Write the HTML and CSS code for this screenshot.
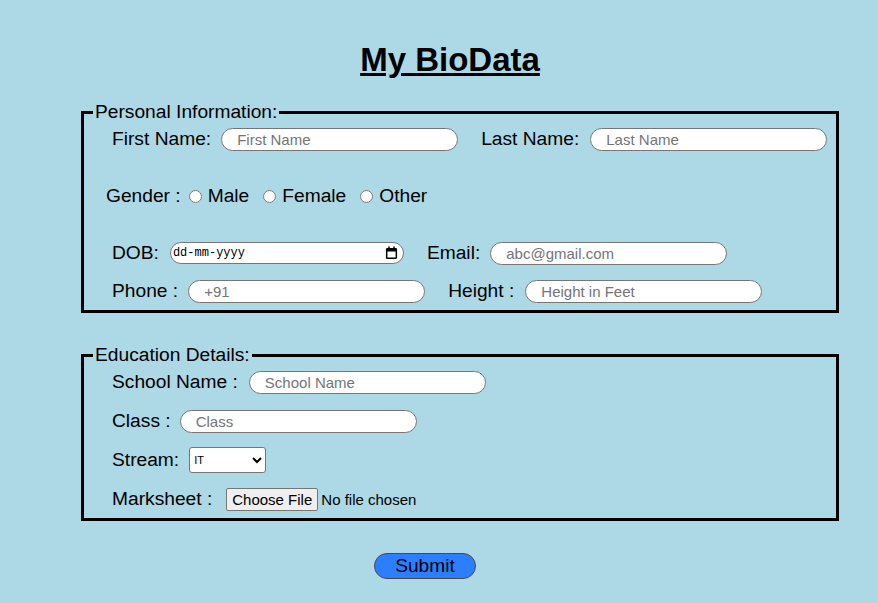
FILE: index.html
```html
<!DOCTYPE html>
<html lang="en">
<head>
<meta charset="utf-8">
<title>My BioData</title>
<link rel="stylesheet" href="styles.css">
</head>
<body>
<h1 class="title">My BioData</h1>
<form class="form">
  <fieldset class="box box-personal">
    <legend class="legend">Personal Information:</legend>
    <div class="row">
      <label class="lbl">First Name:</label>
      <input class="field" type="text" placeholder="First Name">
      <label class="lbl lbl-second">Last Name:</label>
      <input class="field field-last" type="text" placeholder="Last Name">
    </div>
    <div class="row row-gender">
      <span class="lbl">Gender :</span>
      <input class="radio radio-first" type="radio" name="gender"><span class="lbl">Male</span>
      <input class="radio" type="radio" name="gender"><span class="lbl">Female</span>
      <input class="radio" type="radio" name="gender"><span class="lbl">Other</span>
    </div>
    <div class="row row-dob">
      <label class="lbl">DOB:</label>
      <span class="date-wrap">
        <input class="date" type="text" value="dd-mm-yyyy" readonly>
        <svg class="cal-icon" viewBox="0 0 14 15" aria-hidden="true"><path d="M2.5 2h9a1.5 1.5 0 0 1 1.5 1.5v9a1.5 1.5 0 0 1-1.5 1.5h-9A1.5 1.5 0 0 1 1 12.5v-9A1.5 1.5 0 0 1 2.5 2zM2.6 6v6.4h8.8V6z" fill="#000"/><rect x="3.5" y="0.5" width="1.6" height="2.5" fill="#000"/><rect x="8.9" y="0.5" width="1.6" height="2.5" fill="#000"/></svg>
      </span>
      <label class="lbl lbl-second">Email:</label>
      <input class="field" type="text" placeholder="abc@gmail.com">
    </div>
    <div class="row row-phone">
      <label class="lbl">Phone :</label>
      <input class="field" type="text" placeholder="+91">
      <label class="lbl lbl-second">Height :</label>
      <input class="field field-last" type="text" placeholder="Height in Feet">
    </div>
  </fieldset>

  <fieldset class="box box-edu">
    <legend class="legend">Education Details:</legend>
    <div class="row">
      <label class="lbl">School Name :</label>
      <input class="field field-last" type="text" placeholder="School Name">
    </div>
    <div class="row row-class">
      <label class="lbl">Class :</label>
      <input class="field field-class" type="text" placeholder="Class">
    </div>
    <div class="row row-stream">
      <label class="lbl">Stream:</label>
      <select class="select">
        <option>IT</option>
        <option>CS</option>
        <option>EXTC</option>
      </select>
    </div>
    <div class="row row-mark">
      <label class="lbl">Marksheet :</label>
      <input class="file" type="file">
    </div>
  </fieldset>

  <div class="submit-row">
    <button class="submit" type="button">Submit</button>
  </div>
</form>
</body>
</html>
```

FILE: styles.css
```css
body {
  margin: 0;
  background: #add8e6;
  font-family: "Liberation Sans", Arial, sans-serif;
  color: #000;
}

.title {
  margin: 41px 0 0;
  padding-left: 22px;
  text-align: center;
  font-size: 33px;
  line-height: 38px;
  font-weight: bold;
  text-decoration: underline;
}

.form {
  margin: 0;
}

.box {
  box-sizing: border-box;
  width: 758px;
  margin: 22px 0 0 81px;
  border: 3px solid #000;
  padding: 4px 0 7px 9px;
  min-inline-size: auto;
}

.box-edu {
  margin-top: 31px;
  padding-bottom: 7px;
}

.legend {
  padding: 0 2px;
  font-size: 19.2px;
  line-height: 22px;
}

.row {
  display: flex;
  align-items: center;
  height: 24px;
  margin-left: 19px;
}

.lbl {
  font-size: 19.2px;
  line-height: 22px;
  white-space: nowrap;
}

.lbl-second {
  margin-left: 23px;
}

.field {
  box-sizing: border-box;
  width: 237px;
  height: 23px;
  margin: 0 0 0 10px;
  padding: 0 8px 0 15px;
  border: 1px solid #767676;
  border-radius: 12px;
  background: #fff;
  font-family: inherit;
  font-size: 15px;
  color: #000;
  outline: none;
}

.field-last {
  margin-left: 11px;
}

.field-class {
  margin-left: 9px;
}

.field::placeholder {
  color: #757575;
}

.row-gender {
  margin-top: 33px;
  margin-left: 13px;
}

.radio {
  width: 13px;
  height: 13px;
  margin: 0 6px 0 14px;
}

.radio-first {
  margin-left: 8px;
}

.row-dob {
  margin-top: 33px;
}

.date-wrap {
  position: relative;
  display: flex;
  margin-left: 11px;
}

.date {
  box-sizing: border-box;
  width: 234px;
  height: 22px;
  margin: 0;
  padding: 0 0 0 2px;
  border: 1px solid #767676;
  border-radius: 11px;
  background: #fff;
  font-family: "Liberation Mono", "DejaVu Sans Mono", monospace;
  font-size: 12px;
  color: #000;
  outline: none;
}

.cal-icon {
  position: absolute;
  right: 6px;
  top: 4px;
  width: 13px;
  height: 14px;
}

.row-phone {
  margin-top: 14px;
}

.row-class {
  margin-top: 15px;
}

.row-stream {
  margin-top: 14px;
  height: 26px;
}

.select {
  box-sizing: border-box;
  width: 77px;
  height: 26px;
  margin-left: 10px;
  border: 1px solid #767676;
  border-radius: 3px;
  background: #fff;
  font-family: inherit;
  font-size: 11px;
  color: #000;
}

.row-mark {
  margin-top: 14px;
}

.file {
  margin-left: 14px;
  font-family: inherit;
  font-size: 15px;
  color: #000;
}

.file::file-selector-button {
  font: inherit;
  padding: 2px 5px;
  margin-right: 3px;
  border: 1px solid #767676;
  border-radius: 2px;
  background: #efefef;
  color: #000;
}

.submit-row {
  display: flex;
}

.submit {
  box-sizing: border-box;
  width: 102px;
  height: 26px;
  margin: 32px 0 0 374px;
  padding: 0;
  border: 1px solid #4a4a4a;
  border-radius: 13px;
  background: #2b7fff;
  font-family: inherit;
  font-size: 19.2px;
  color: #000;
}
```
